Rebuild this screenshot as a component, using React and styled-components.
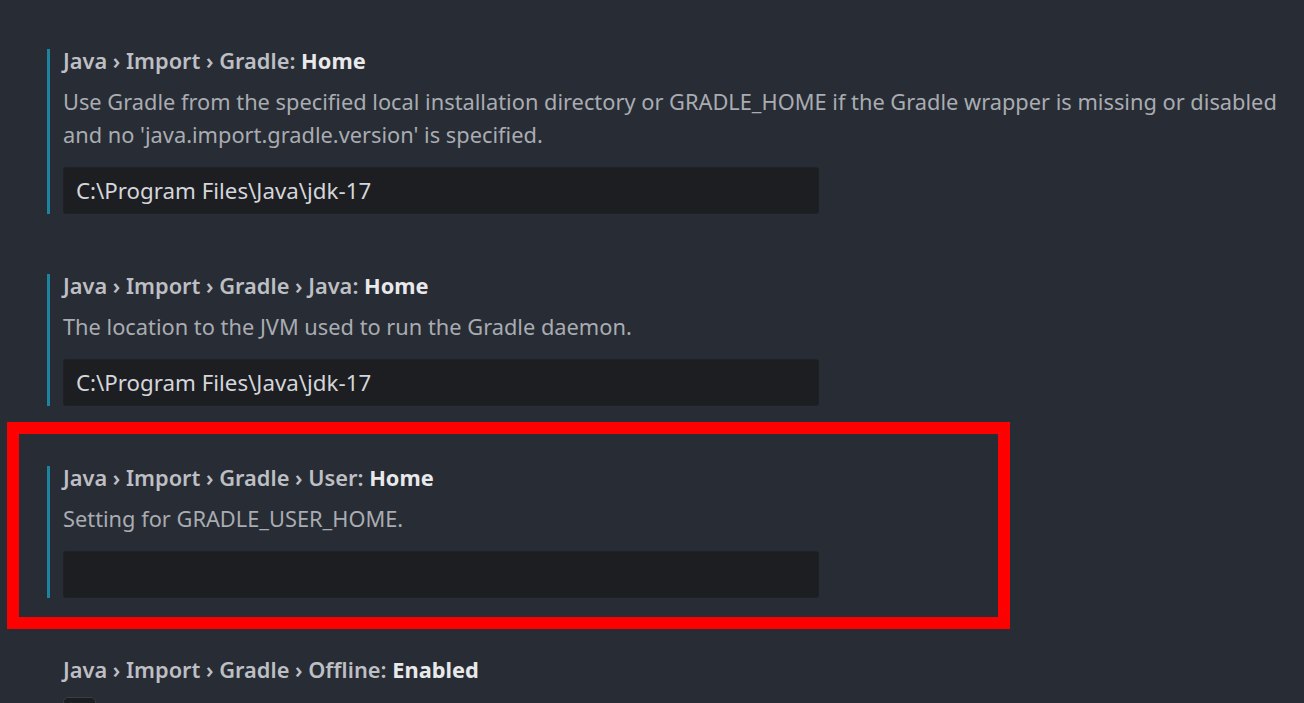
import React from "react";
import styled, { createGlobalStyle } from "styled-components";

const GlobalStyle = createGlobalStyle`
  html, body {
    margin: 0;
    padding: 0;
    background: #282c34;
    overflow: hidden;
  }
  body {
    font-family: "Noto Sans", "Open Sans", sans-serif;
  }
`;

const settings = [
  {
    path: "Java › Import › Gradle: ",
    name: "Home",
    description:
      "Use Gradle from the specified local installation directory or GRADLE_HOME if the Gradle wrapper is missing or disabled and no 'java.import.gradle.version' is specified.",
    value: "C:\\Program Files\\Java\\jdk-17",
    modified: true,
  },
  {
    path: "Java › Import › Gradle › Java: ",
    name: "Home",
    description: "The location to the JVM used to run the Gradle daemon.",
    value: "C:\\Program Files\\Java\\jdk-17",
    modified: true,
  },
  {
    path: "Java › Import › Gradle › User: ",
    name: "Home",
    description: "Setting for GRADLE_USER_HOME.",
    value: "",
    modified: true,
    highlighted: true,
  },
  {
    path: "Java › Import › Gradle › Offline: ",
    name: "Enabled",
    checkbox: true,
  },
];

export default function App() {
  return (
    <>
      <GlobalStyle />
      <Page>
        {settings.map((s, i) => (
          <SettingItem key={i} $modified={s.modified}>
            {s.highlighted && <Highlight />}
            <Title>
              {s.path}
              <Name>{s.name}</Name>
            </Title>
            {s.description && <Description>{s.description}</Description>}
            {s.checkbox ? (
              <Checkbox />
            ) : (
              <TextInput readOnly value={s.value} />
            )}
          </SettingItem>
        ))}
      </Page>
    </>
  );
}

const Page = styled.div`
  display: flex;
  flex-direction: column;
  gap: 60px;
  padding: 49px 0 0 47px;
  width: 1304px;
  height: 703px;
  box-sizing: border-box;
`;

const SettingItem = styled.section`
  position: relative;
  display: flex;
  flex-direction: column;
  align-items: flex-start;
  padding-left: 13px;
  border-left: 3px solid ${(p) => (p.$modified ? "#1b84a0" : "transparent")};
`;

const Highlight = styled.div`
  position: absolute;
  top: -44px;
  left: -43px;
  width: 1003px;
  height: 207px;
  border: 12px solid #ff0000;
  box-sizing: border-box;
  pointer-events: none;
`;

const Title = styled.div`
  height: 24px;
  line-height: 24px;
  font-size: 21.8px;
  font-weight: 600;
  color: #bdbfc4;
  white-space: nowrap;
`;

const Name = styled.span`
  font-weight: 700;
  color: #e8e9eb;
`;

const Description = styled.p`
  margin: 12px 0 0;
  max-width: 1240px;
  font-size: 21.8px;
  line-height: 33px;
  color: #a9acb2;
`;

const TextInput = styled.input`
  margin-top: 16px;
  width: 756px;
  height: 47px;
  padding: 0 12px;
  box-sizing: border-box;
  border: 1px solid #1f2126;
  border-radius: 3px;
  background: #1d1e22;
  color: #d4d6da;
  font-family: "Noto Sans", "Open Sans", sans-serif;
  font-size: 22.3px;
  outline: none;
`;

const Checkbox = styled.div`
  margin-top: 15px;
  width: 33px;
  height: 30px;
  box-sizing: border-box;
  border: 1px solid #3a3d44;
  border-radius: 5px;
  background: #1d1e22;
`;
